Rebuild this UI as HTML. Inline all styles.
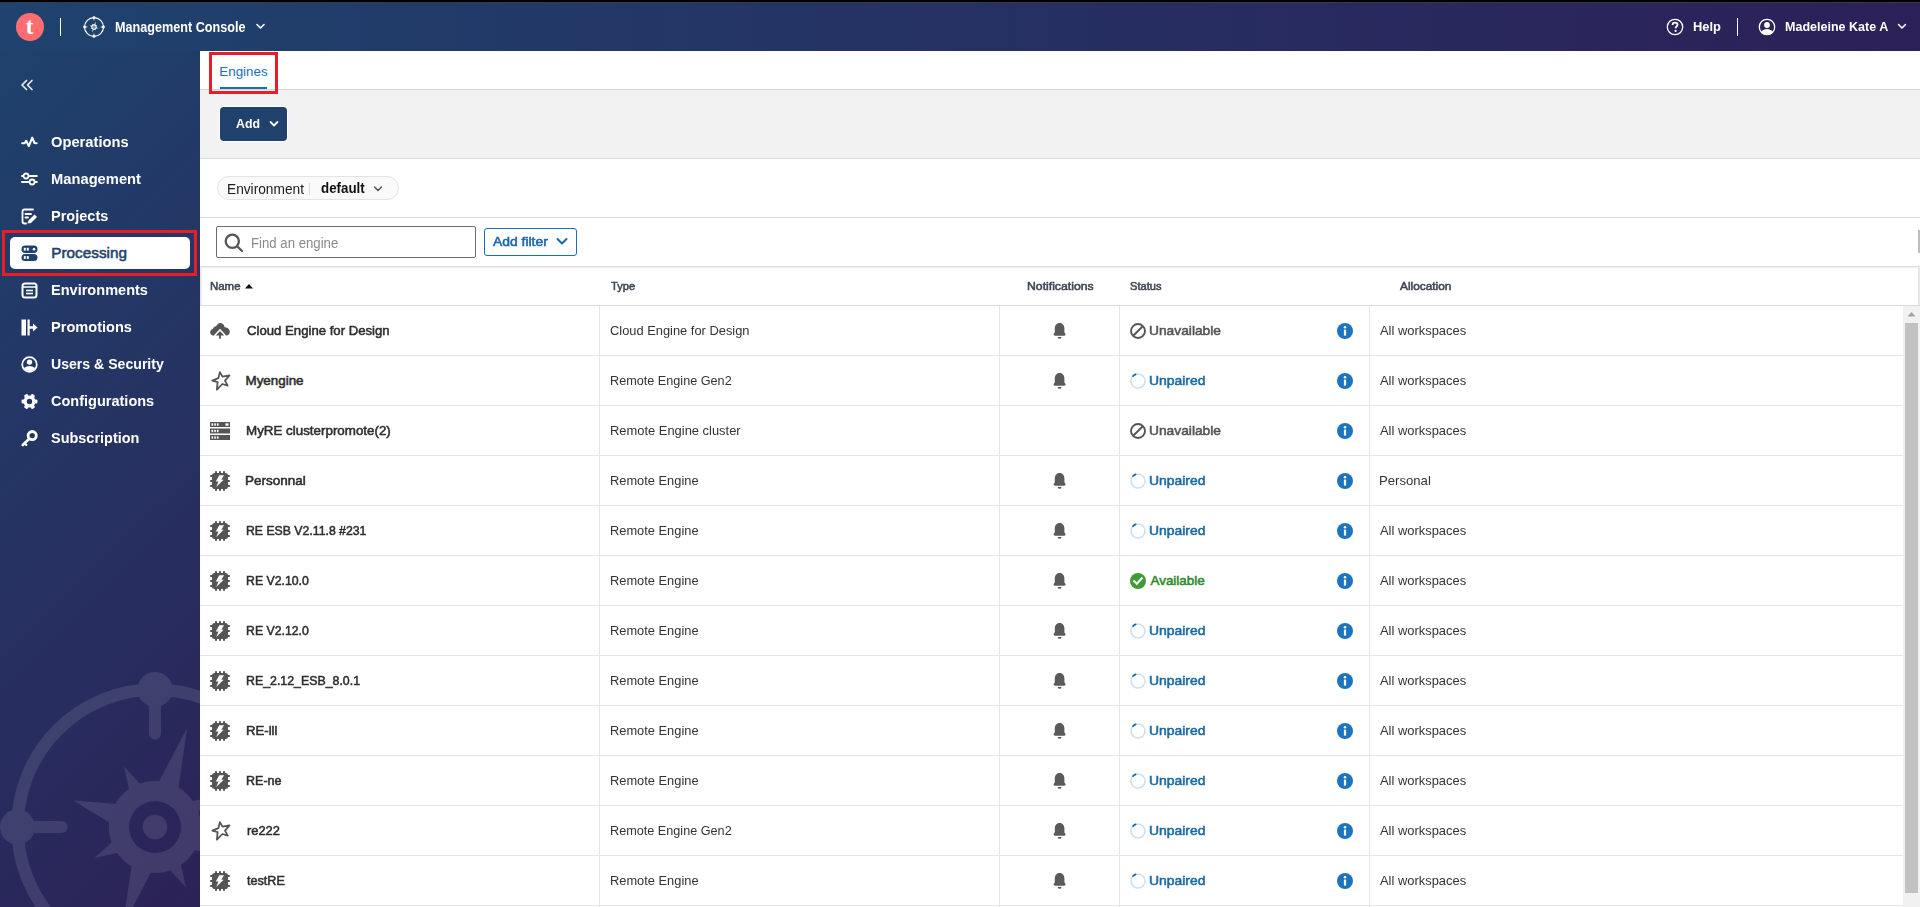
<!DOCTYPE html>
<html><head><meta charset="utf-8"><title>Management Console</title>
<style>
html,body{margin:0;padding:0;width:1920px;height:907px;overflow:hidden;background:#fff;}
body{position:relative;font-family:"Liberation Sans",sans-serif;}
.t{position:absolute;white-space:nowrap;transform-origin:0 50%;}
.b{position:absolute;display:block;}
</style></head><body>
<div class="b" style="left:0px;top:0px;width:1920px;height:51px;background:linear-gradient(90deg,#1f436e 0%,#253163 50%,#2c2058 100%);"></div>
<div class="b" style="left:0px;top:51px;width:200px;height:856px;background:linear-gradient(135deg,#1f426d 0%,#2c2257 100%);"></div>
<div class="b" style="left:200px;top:51px;width:1720px;height:856px;background:#fff;"></div>
<div class="b" style="left:0px;top:0px;width:1920px;height:2px;background:#000;"></div>
<div class="b" style="left:0px;top:2px;width:1920px;height:1px;background:#3a3a44;"></div>
<div class="b" style="left:0;top:51px;width:200px;height:856px;overflow:hidden;"><svg style="position:absolute;left:-15px;top:606px" width="340" height="340" viewBox="-20 -20 340 340"><defs><mask id="cmask" maskUnits="userSpaceOnUse" x="0" y="0" width="300" height="300"><rect x="0" y="0" width="300" height="300" fill="#fff"/><circle cx="150" cy="150" r="26" fill="#000"/><circle cx="150" cy="150" r="12.2" fill="#fff"/></mask></defs><g fill="#fff" opacity="0.1"><circle cx="150" cy="150" r="137.5" fill="none" stroke="#fff" stroke-width="12.5"/><circle cx="150" cy="12.5" r="17.5"/><circle cx="150" cy="287.5" r="17.5"/><circle cx="12.5" cy="150" r="17.5"/><circle cx="287.5" cy="150" r="17.5"/><g stroke="#fff" stroke-width="12" stroke-linecap="round"><line x1="150" y1="12.5" x2="150" y2="56.6"/><line x1="150" y1="287.5" x2="150" y2="243.4"/><line x1="12.5" y1="150" x2="56.6" y2="150"/><line x1="287.5" y1="150" x2="243.4" y2="150"/></g><g mask="url(#cmask)"><circle cx="150" cy="150" r="46"/><polygon points="151.9,108.6 182.1,51.1 172.8,115.4"/><polygon points="182.2,125.2 210.6,119.1 189.0,138.5"/><polygon points="191.4,151.9 231.8,176.6 184.6,172.8"/><polygon points="174.8,182.2 180.9,210.6 161.5,189.0"/><polygon points="148.1,191.4 117.9,248.9 127.2,184.6"/><polygon points="117.8,174.8 89.4,180.9 111.0,161.5"/><polygon points="108.6,148.1 68.2,123.4 115.4,127.2"/><polygon points="125.2,117.8 119.1,89.4 138.5,111.0"/></g></g></svg></div>
<svg class="b" style="left:16px;top:13px;" width="28" height="28" viewBox="0 0 28 28"><circle cx="14" cy="14" r="14" fill="#ff6d70"/><text x="13.6" y="21.3" text-anchor="middle" font-family="Liberation Serif" font-weight="700" font-size="23" fill="#fff">t</text></svg>
<div class="b" style="left:60px;top:18px;width:1px;height:18px;background:#fff;"></div>
<svg class="b" style="left:82.75px;top:16px" width="22" height="22" viewBox="-7 -7 314 314"><defs><mask id="cmask2" maskUnits="userSpaceOnUse" x="-10" y="-10" width="320" height="320"><rect x="-10" y="-10" width="320" height="320" fill="#fff"/><circle cx="150" cy="150" r="22" fill="#000"/><circle cx="150" cy="150" r="11" fill="#fff"/></mask></defs><g fill="#fff"><circle cx="150" cy="150" r="135" fill="none" stroke="#fff" stroke-width="17"/><circle cx="150" cy="15" r="20"/><circle cx="150" cy="285" r="20"/><circle cx="15" cy="150" r="20"/><circle cx="285" cy="150" r="20"/><g stroke="#fff" stroke-width="12" stroke-linecap="round"><line x1="150" y1="15" x2="150" y2="50"/><line x1="150" y1="285" x2="150" y2="250"/><line x1="15" y1="150" x2="50" y2="150"/><line x1="285" y1="150" x2="250" y2="150"/></g><g mask="url(#cmask2)"><circle cx="150" cy="150" r="38"/><g transform="translate(150 150) scale(0.8) translate(-150 -150)"><polygon points="151.9,108.6 182.1,51.1 172.8,115.4"/><polygon points="182.2,125.2 210.6,119.1 189.0,138.5"/><polygon points="191.4,151.9 231.8,176.6 184.6,172.8"/><polygon points="174.8,182.2 180.9,210.6 161.5,189.0"/><polygon points="148.1,191.4 117.9,248.9 127.2,184.6"/><polygon points="117.8,174.8 89.4,180.9 111.0,161.5"/><polygon points="108.6,148.1 68.2,123.4 115.4,127.2"/><polygon points="125.2,117.8 119.1,89.4 138.5,111.0"/></g></g></g></svg>
<div class="t" style="left:115.11px;top:18.56px;font-size:14.2px;line-height:17.04px;color:#ffffff;font-weight:700;transform:scaleX(0.8897);">Management Console</div>
<svg class="b" style="left:256px;top:23px;" width="9" height="7" viewBox="0 0 9 7"><polyline points="1,1.5 4.5,5 8,1.5" fill="none" stroke="#fff" stroke-width="1.6" stroke-linecap="round" stroke-linejoin="round"/></svg>
<svg class="b" style="left:1666px;top:18px;" width="18" height="18" viewBox="0 0 18 18"><circle cx="9" cy="9" r="7.7" fill="none" stroke="#fff" stroke-width="1.3"/><path d="M6.6,6.9 C6.6,5.4 7.6,4.6 9,4.6 C10.5,4.6 11.5,5.4 11.5,6.7 C11.5,8.4 9.6,8.5 9.6,10.3" fill="none" stroke="#fff" stroke-width="1.8" stroke-linecap="butt"/><circle cx="9.6" cy="12.9" r="1.1" fill="#fff"/></svg>
<div class="t" style="left:1693.04px;top:19.22px;font-size:13.4px;line-height:16.08px;color:#ffffff;font-weight:700;transform:scaleX(0.9643);">Help</div>
<div class="b" style="left:1737px;top:18px;width:1px;height:18px;background:#fff;"></div>
<svg class="b" style="left:1758px;top:18px;" width="18" height="18" viewBox="0 0 18 18"><defs><clipPath id="uc"><circle cx="9" cy="9" r="8"/></clipPath></defs><circle cx="9" cy="9" r="7.7" fill="none" stroke="#fff" stroke-width="1.3"/><circle cx="9" cy="7" r="2.9" fill="#fff"/><g clip-path="url(#uc)"><ellipse cx="9" cy="16.2" rx="6.6" ry="5.2" fill="#fff"/></g></svg>
<div class="t" style="left:1785.06px;top:19.22px;font-size:13.4px;line-height:16.08px;color:#ffffff;font-weight:700;transform:scaleX(0.9358);">Madeleine Kate A</div>
<svg class="b" style="left:1897px;top:23px;" width="10" height="7" viewBox="0 0 10 7"><polyline points="1.5,1.5 5,5 8.5,1.5" fill="none" stroke="#fff" stroke-width="1.6" stroke-linecap="round" stroke-linejoin="round"/></svg>
<svg class="b" style="left:20px;top:78px;" width="14" height="14" viewBox="0 0 14 14"><g fill="none" stroke="#e6e9f0" stroke-width="1.7" stroke-linecap="round" stroke-linejoin="round"><polyline points="6.5,2.5 2,7 6.5,11.5"/><polyline points="12,2.5 7.5,7 12,11.5"/></g></svg>
<div class="b" style="left:10px;top:237px;width:180px;height:32px;background:#fff;border-radius:5px;"></div>
<svg class="b" style="left:20.5px;top:134.5px;" width="17" height="17" viewBox="0 0 17 17"><polyline points="1.2,8.25 3.6,8.25 5.2,5.8 7.8,11.1 11.3,2.7 13.5,8 15.6,8.25" fill="none" stroke="#fff" stroke-width="2.1" stroke-linecap="round" stroke-linejoin="round"/></svg>
<div class="t" style="left:51.34px;top:133.22px;font-size:15.3px;line-height:18.36px;color:#ffffff;font-weight:700;transform:scaleX(0.9620);">Operations</div>
<svg class="b" style="left:20.5px;top:171px;" width="17" height="17" viewBox="0 0 17 17"><g stroke="#fff" stroke-width="2" stroke-linecap="round" fill="none"><line x1="1" y1="5" x2="15.8" y2="5"/><line x1="1" y1="11" x2="15.8" y2="11"/></g><circle cx="5" cy="5" r="2.5" fill="#1f406c" stroke="#fff" stroke-width="1.8"/><circle cx="11.1" cy="11" r="2.5" fill="#1f406c" stroke="#fff" stroke-width="1.8"/></svg>
<div class="t" style="left:51.34px;top:170.22px;font-size:15.3px;line-height:18.36px;color:#ffffff;font-weight:700;transform:scaleX(0.9624);">Management</div>
<svg class="b" style="left:20.5px;top:208px;" width="17" height="17" viewBox="0 0 17 17"><path d="M12,1.5 H3.5 Q1.5,1.5 1.5,3.5 V13.5 Q1.5,15.5 3.5,15.5 H5" fill="none" stroke="#fff" stroke-width="1.8" stroke-linecap="round"/><line x1="4.5" y1="6" x2="10" y2="6" stroke="#fff" stroke-width="1.8" stroke-linecap="round"/><line x1="4.5" y1="9.5" x2="7" y2="9.5" stroke="#fff" stroke-width="1.8" stroke-linecap="round"/><path d="M13.5,6.5 L16,9 L10,15 L6.5,15.5 L7.5,12.5 Z" fill="#fff"/></svg>
<div class="t" style="left:51.35px;top:207.22px;font-size:15.3px;line-height:18.36px;color:#ffffff;font-weight:700;transform:scaleX(0.9492);">Projects</div>
<svg class="b" style="left:20.5px;top:245px;" width="17" height="17" viewBox="0 0 17 17"><rect x="0.5" y="0.5" width="16" height="7.5" rx="3.75" fill="#1f416c"/><rect x="0.5" y="9" width="16" height="7" rx="3.5" fill="#1f416c"/><rect x="2.8" y="2.8" width="2" height="2.8" fill="#fff"/><rect x="5.8" y="2.8" width="2" height="2.8" fill="#fff"/><circle cx="13" cy="4.2" r="1.3" fill="#fff"/><rect x="2.8" y="11.1" width="2" height="2.8" fill="#fff"/><rect x="5.8" y="11.1" width="2" height="2.8" fill="#fff"/></svg>
<div class="t" style="left:51.30px;top:244.22px;font-size:15.3px;line-height:18.36px;color:#1f416c;font-weight:400;-webkit-text-stroke:0.55px #1f416c;">Processing</div>
<svg class="b" style="left:20.5px;top:281.5px;" width="17" height="17" viewBox="0 0 17 17"><rect x="1.5" y="1.5" width="14" height="14" rx="2.5" fill="none" stroke="#fff" stroke-width="2"/><line x1="1.5" y1="5" x2="15.5" y2="5" stroke="#fff" stroke-width="1.5"/><line x1="5" y1="8.5" x2="12" y2="8.5" stroke="#fff" stroke-width="1.6"/><line x1="5" y1="11.5" x2="12" y2="11.5" stroke="#fff" stroke-width="1.6"/></svg>
<div class="t" style="left:51.35px;top:281.22px;font-size:15.3px;line-height:18.36px;color:#ffffff;font-weight:700;transform:scaleX(0.9505);">Environments</div>
<svg class="b" style="left:20.5px;top:319px;" width="17" height="17" viewBox="0 0 17 17"><rect x="0.5" y="0.5" width="4.5" height="16" fill="#fff"/><rect x="6.5" y="0.5" width="2.2" height="16" fill="#fff"/><polygon points="8,7.2 12,7.2 12,4.6 16.5,8.5 12,12.4 12,9.8 8,9.8" fill="#fff"/></svg>
<div class="t" style="left:51.35px;top:318.22px;font-size:15.3px;line-height:18.36px;color:#ffffff;font-weight:700;transform:scaleX(0.9524);">Promotions</div>
<svg class="b" style="left:20.5px;top:356px;" width="17" height="17" viewBox="0 0 17 17"><defs><clipPath id="uc2"><circle cx="8.5" cy="8.5" r="6.6"/></clipPath></defs><circle cx="8.5" cy="8.5" r="7.3" fill="none" stroke="#fff" stroke-width="1.7"/><circle cx="8.5" cy="6.1" r="2.7" fill="#fff"/><g clip-path="url(#uc2)"><ellipse cx="8.5" cy="15.2" rx="6.8" ry="5.2" fill="#fff"/></g></svg>
<div class="t" style="left:51.38px;top:355.22px;font-size:15.3px;line-height:18.36px;color:#ffffff;font-weight:700;transform:scaleX(0.9215);">Users &amp; Security</div>
<svg class="b" style="left:20.5px;top:393px;" width="17" height="17" viewBox="0 0 17 17"><circle cx="8.5" cy="8.5" r="6" fill="#fff"/><rect x="6.5" y="0.6" width="4" height="4.2" rx="0.9" fill="#fff" transform="rotate(30 8.5 8.5)"/><rect x="6.5" y="0.6" width="4" height="4.2" rx="0.9" fill="#fff" transform="rotate(90 8.5 8.5)"/><rect x="6.5" y="0.6" width="4" height="4.2" rx="0.9" fill="#fff" transform="rotate(150 8.5 8.5)"/><rect x="6.5" y="0.6" width="4" height="4.2" rx="0.9" fill="#fff" transform="rotate(210 8.5 8.5)"/><rect x="6.5" y="0.6" width="4" height="4.2" rx="0.9" fill="#fff" transform="rotate(270 8.5 8.5)"/><rect x="6.5" y="0.6" width="4" height="4.2" rx="0.9" fill="#fff" transform="rotate(330 8.5 8.5)"/><circle cx="8.5" cy="8.5" r="2.7" fill="#23365f"/></svg>
<div class="t" style="left:51.35px;top:392.22px;font-size:15.3px;line-height:18.36px;color:#ffffff;font-weight:700;transform:scaleX(0.9486);">Configurations</div>
<svg class="b" style="left:20.5px;top:430px;" width="17" height="17" viewBox="0 0 17 17"><circle cx="11.2" cy="5.6" r="4.1" fill="none" stroke="#fff" stroke-width="2.8"/><line x1="8.2" y1="8.7" x2="1.8" y2="15" stroke="#fff" stroke-width="2.6" stroke-linecap="round"/><line x1="3.6" y1="13.2" x2="5.3" y2="14.9" stroke="#fff" stroke-width="2.2" stroke-linecap="round"/></svg>
<div class="t" style="left:51.35px;top:429.22px;font-size:15.3px;line-height:18.36px;color:#ffffff;font-weight:700;transform:scaleX(0.9457);">Subscription</div>
<div class="b" style="left:200px;top:51px;width:1720px;height:38px;background:#fff;"></div>
<div class="b" style="left:200px;top:89px;width:1720px;height:1px;background:#d4d4d4;"></div>
<div class="t" style="left:219.30px;top:64.02px;font-size:13.4px;line-height:16.08px;color:#1a6fba;font-weight:400;">Engines</div>
<div class="b" style="left:220px;top:87px;width:47px;height:2px;background:#1a6fba;"></div>
<div class="b" style="left:200px;top:90px;width:1720px;height:68px;background:#f2f2f2;"></div>
<div class="b" style="left:200px;top:158px;width:1720px;height:1px;background:#d9d9d9;"></div>
<div class="b" style="left:219px;top:106px;width:69px;height:36px;background:#fff;border-radius:5px;"></div>
<div class="b" style="left:220px;top:107px;width:67px;height:34px;background:#1f416c;border-radius:4px;"></div>
<div class="t" style="left:236.00px;top:115.72px;font-size:13.4px;line-height:16.08px;color:#ffffff;font-weight:700;transform:scaleX(0.9200);">Add</div>
<svg class="b" style="left:269px;top:120px;" width="10" height="8" viewBox="0 0 10 8"><polyline points="1.5,2 5,5.5 8.5,2" fill="none" stroke="#fff" stroke-width="1.8" stroke-linecap="round" stroke-linejoin="round"/></svg>
<div class="b" style="left:200px;top:159px;width:1720px;height:58px;background:#fff;"></div>
<div class="b" style="left:200px;top:217px;width:1720px;height:1px;background:#dcdcdc;"></div>
<div class="b" style="left:217px;top:176px;width:182px;height:24px;box-sizing:border-box;background:#fafafa;border:1px solid #e3e3e3;border-radius:12px;"></div>
<div class="t" style="left:227.41px;top:181.54px;font-size:13.8px;line-height:16.56px;color:#202020;font-weight:400;transform:scaleX(0.9934);">Environment</div>
<div class="b" style="left:309px;top:183px;width:1px;height:12px;background:#dcdcdc;"></div>
<div class="t" style="left:320.53px;top:180.84px;font-size:13.8px;line-height:16.56px;color:#111;font-weight:700;transform:scaleX(0.9659);">default</div>
<svg class="b" style="left:373px;top:185px;" width="10" height="8" viewBox="0 0 10 8"><polyline points="1.5,2 5,5.5 8.5,2" fill="none" stroke="#555" stroke-width="1.5" stroke-linecap="round" stroke-linejoin="round"/></svg>
<div class="b" style="left:200px;top:218px;width:1720px;height:48px;background:#fff;"></div>
<div class="b" style="left:216px;top:226px;width:260px;height:32px;box-sizing:border-box;background:#fff;border:1px solid #6b6b6b;border-radius:2px;"></div>
<svg class="b" style="left:224px;top:233px;" width="20" height="20" viewBox="0 0 20 20"><circle cx="8.3" cy="8.3" r="6.6" fill="none" stroke="#555" stroke-width="2.3"/><line x1="13.2" y1="13.2" x2="18" y2="18" stroke="#555" stroke-width="2.3" stroke-linecap="round"/></svg>
<div class="t" style="left:251.13px;top:233.61px;font-size:15.2px;line-height:18.24px;color:#8a8a8a;font-weight:400;transform:scaleX(0.8687);">Find an engine</div>
<div class="b" style="left:484px;top:228px;width:93px;height:28px;box-sizing:border-box;background:#fff;border:1px solid #1a6fba;border-radius:3px;"></div>
<div class="t" style="left:493.30px;top:234.02px;font-size:13.4px;line-height:16.08px;color:#1a66aa;font-weight:400;-webkit-text-stroke:0.55px #1a66aa;transform:scaleX(1.0377);">Add filter</div>
<svg class="b" style="left:556px;top:237px;" width="12" height="9" viewBox="0 0 12 9"><polyline points="1.5,2 6,6.5 10.5,2" fill="none" stroke="#1a66aa" stroke-width="2" stroke-linecap="round" stroke-linejoin="round"/></svg>
<div class="b" style="left:200px;top:266px;width:1720px;height:39px;box-sizing:border-box;background:#fff;border-left:1px solid #e6e6e6;border-right:2px solid #e6e6e6;"></div>
<div class="b" style="left:200px;top:266px;width:1720px;height:1px;background:#dcdcdc;"></div>
<div class="b" style="left:200px;top:267px;width:1720px;height:1px;background:#f0f0f0;"></div>
<div class="b" style="left:201px;top:267px;width:1px;height:38px;background:#efefef;"></div>
<div class="b" style="left:200px;top:305px;width:1720px;height:1px;background:#d9d9d9;"></div>
<div class="b" style="left:1918px;top:230px;width:2px;height:23px;background:#bdbdbd;"></div>
<div class="t" style="left:210.21px;top:279.02px;font-size:11.6px;line-height:13.92px;color:#3f4553;font-weight:400;-webkit-text-stroke:0.55px #3f4553;transform:scaleX(0.9867);">Name</div>
<svg class="b" style="left:244px;top:283px;" width="10" height="6" viewBox="0 0 10 6"><polygon points="1,5.5 5,1 9,5.5" fill="#111"/></svg>
<div class="t" style="left:610.90px;top:279.02px;font-size:11.6px;line-height:13.92px;color:#3f4553;font-weight:400;-webkit-text-stroke:0.55px #3f4553;transform:scaleX(0.9600);">Type</div>
<div class="t" style="left:1026.55px;top:279.02px;font-size:11.6px;line-height:13.92px;color:#3f4553;font-weight:400;-webkit-text-stroke:0.55px #3f4553;transform:scaleX(1.0548);">Notifications</div>
<div class="t" style="left:1130.40px;top:279.02px;font-size:11.6px;line-height:13.92px;color:#3f4553;font-weight:400;-webkit-text-stroke:0.55px #3f4553;transform:scaleX(0.9576);">Status</div>
<div class="t" style="left:1400.30px;top:279.02px;font-size:11.6px;line-height:13.92px;color:#3f4553;font-weight:400;-webkit-text-stroke:0.55px #3f4553;transform:scaleX(1.0220);">Allocation</div>
<div class="b" style="left:200px;top:355px;width:1703px;height:1px;background:#e6e6e6;"></div>
<div class="b" style="left:200px;top:405px;width:1703px;height:1px;background:#e6e6e6;"></div>
<div class="b" style="left:200px;top:455px;width:1703px;height:1px;background:#e6e6e6;"></div>
<div class="b" style="left:200px;top:505px;width:1703px;height:1px;background:#e6e6e6;"></div>
<div class="b" style="left:200px;top:555px;width:1703px;height:1px;background:#e6e6e6;"></div>
<div class="b" style="left:200px;top:605px;width:1703px;height:1px;background:#e6e6e6;"></div>
<div class="b" style="left:200px;top:655px;width:1703px;height:1px;background:#e6e6e6;"></div>
<div class="b" style="left:200px;top:705px;width:1703px;height:1px;background:#e6e6e6;"></div>
<div class="b" style="left:200px;top:755px;width:1703px;height:1px;background:#e6e6e6;"></div>
<div class="b" style="left:200px;top:805px;width:1703px;height:1px;background:#e6e6e6;"></div>
<div class="b" style="left:200px;top:855px;width:1703px;height:1px;background:#e6e6e6;"></div>
<div class="b" style="left:200px;top:905px;width:1703px;height:1px;background:#e6e6e6;"></div>
<div class="b" style="left:599px;top:306px;width:1px;height:601px;background:#e6e6e6;"></div>
<div class="b" style="left:999px;top:306px;width:1px;height:601px;background:#e6e6e6;"></div>
<div class="b" style="left:1119px;top:306px;width:1px;height:601px;background:#e6e6e6;"></div>
<div class="b" style="left:1369px;top:306px;width:1px;height:601px;background:#e6e6e6;"></div>
<div class="b" style="left:1903px;top:306px;width:17px;height:601px;background:#f1f1f1;"></div>
<svg class="b" style="left:1906px;top:310px;" width="11" height="8" viewBox="0 0 11 8"><polygon points="1.5,6.5 5.5,2 9.5,6.5" fill="#a3a3a3"/></svg>
<div class="b" style="left:1905px;top:323px;width:13px;height:570px;background:#c1c1c1;"></div>
<svg class="b" style="left:210px;top:323px;" width="20" height="16" viewBox="0 0 20 16"><path d="M3.5,12.4 C1.3,12.4 0.2,10.9 0.2,9.2 C0.2,7.5 1.4,6.2 3,6 C3.3,4.3 4.6,3.2 6.2,3.2 C7.1,1.3 8.4,0 10.2,0 C12.6,0 14.4,1.8 14.6,4.2 C17.4,4.3 19.8,6.2 19.8,8.7 C19.8,10.9 18.3,12.4 16.2,12.4 Z" fill="#555"/><polyline points="4.6,12.8 10,7.1 15.4,12.8" fill="none" stroke="#fff" stroke-width="1.7"/><polygon points="10,8.3 13.8,12.1 10.9,12.1 10.9,15.8 9.1,15.8 9.1,12.1 6.2,12.1" fill="#555"/></svg>
<div class="t" style="left:246.50px;top:323.02px;font-size:13.4px;line-height:16.08px;color:#2e2e2e;font-weight:400;-webkit-text-stroke:0.55px #2e2e2e;transform:scaleX(0.9828);">Cloud Engine for Design</div>
<div class="t" style="left:609.64px;top:323.02px;font-size:13.4px;line-height:16.08px;color:#333333;font-weight:400;transform:scaleX(0.9611);">Cloud Engine for Design</div>
<svg class="b" style="left:1052.8px;top:323px;" width="13" height="16" viewBox="0 0 13 16"><path d="M6.6,0.1 C3.4,0.1 1.8,2.6 1.8,5.6 L1.8,9.1 C1.8,10.1 0.6,10.7 0.6,11.5 C0.6,12.2 1.2,12.7 2,12.7 L11.2,12.7 C12,12.7 12.6,12.2 12.6,11.5 C12.6,10.7 11.4,10.1 11.4,9.1 L11.4,5.6 C11.4,2.6 9.8,0.1 6.6,0.1 Z" fill="#5a5a5a"/><path d="M4.7,13.9 L8.5,13.9 C8.5,15 7.7,15.8 6.6,15.8 C5.5,15.8 4.7,15 4.7,13.9 Z" fill="#5a5a5a"/></svg>
<svg class="b" style="left:1130px;top:323px;" width="16" height="16" viewBox="0 0 16 16"><circle cx="8" cy="8" r="7" fill="none" stroke="#555" stroke-width="1.9"/><line x1="12.5" y1="3.5" x2="3.5" y2="12.5" stroke="#555" stroke-width="1.9"/></svg>
<div class="t" style="left:1149.47px;top:323.02px;font-size:13.4px;line-height:16.08px;color:#555555;font-weight:400;-webkit-text-stroke:0.55px #555555;transform:scaleX(1.0290);">Unavailable</div>
<svg class="b" style="left:1337px;top:323px;" width="16" height="16" viewBox="0 0 16 16"><circle cx="8" cy="8" r="8" fill="#1d74be"/><rect x="6.9" y="6.6" width="2.2" height="6" fill="#fff"/><circle cx="8" cy="4.3" r="1.25" fill="#fff"/></svg>
<div class="t" style="left:1380.20px;top:323.02px;font-size:13.4px;line-height:16.08px;color:#333333;font-weight:400;transform:scaleX(0.9640);">All workspaces</div>
<svg class="b" style="left:210.5px;top:371.2px;" width="20" height="20" viewBox="0 0 20 20"><polygon points="8.9,1.1 11.5,5.6 18.5,4.3 14,9.6 16.7,14.7 11.4,13 5.9,18.7 6.6,11.2 1.3,9.6 7.4,7.1" fill="none" stroke="#555" stroke-width="1.8" stroke-linejoin="round"/></svg>
<div class="t" style="left:245.50px;top:373.02px;font-size:13.4px;line-height:16.08px;color:#2e2e2e;font-weight:400;-webkit-text-stroke:0.55px #2e2e2e;">Myengine</div>
<div class="t" style="left:609.66px;top:373.02px;font-size:13.4px;line-height:16.08px;color:#333333;font-weight:400;transform:scaleX(0.9449);">Remote Engine Gen2</div>
<svg class="b" style="left:1052.8px;top:373px;" width="13" height="16" viewBox="0 0 13 16"><path d="M6.6,0.1 C3.4,0.1 1.8,2.6 1.8,5.6 L1.8,9.1 C1.8,10.1 0.6,10.7 0.6,11.5 C0.6,12.2 1.2,12.7 2,12.7 L11.2,12.7 C12,12.7 12.6,12.2 12.6,11.5 C12.6,10.7 11.4,10.1 11.4,9.1 L11.4,5.6 C11.4,2.6 9.8,0.1 6.6,0.1 Z" fill="#5a5a5a"/><path d="M4.7,13.9 L8.5,13.9 C8.5,15 7.7,15.8 6.6,15.8 C5.5,15.8 4.7,15 4.7,13.9 Z" fill="#5a5a5a"/></svg>
<svg class="b" style="left:1130px;top:373px;" width="16" height="16" viewBox="0 0 16 16"><circle cx="8" cy="8" r="7" fill="none" stroke="#cde0f1" stroke-width="1.6"/><path d="M3.05,3.05 A7,7 0 0 1 5.6,1.4" fill="none" stroke="#1b6aa5" stroke-width="1.8" stroke-linecap="round"/></svg>
<div class="t" style="left:1149.46px;top:373.02px;font-size:13.4px;line-height:16.08px;color:#1b6aa5;font-weight:400;-webkit-text-stroke:0.55px #1b6aa5;transform:scaleX(1.0377);">Unpaired</div>
<svg class="b" style="left:1337px;top:373px;" width="16" height="16" viewBox="0 0 16 16"><circle cx="8" cy="8" r="8" fill="#1d74be"/><rect x="6.9" y="6.6" width="2.2" height="6" fill="#fff"/><circle cx="8" cy="4.3" r="1.25" fill="#fff"/></svg>
<div class="t" style="left:1380.20px;top:373.02px;font-size:13.4px;line-height:16.08px;color:#333333;font-weight:400;transform:scaleX(0.9640);">All workspaces</div>
<svg class="b" style="left:210px;top:422px;" width="20" height="18" viewBox="0 0 20 18"><rect x="0" y="0" width="20" height="5" fill="#555"/><rect x="0" y="6.5" width="20" height="5" fill="#555"/><rect x="0" y="13" width="20" height="5" fill="#555"/><g fill="#fff"><rect x="1.5" y="1.3" width="1.6" height="2.4"/><rect x="4.2" y="1.3" width="1.6" height="2.4"/><rect x="6.9" y="1.3" width="1.6" height="2.4"/><rect x="15.5" y="1.3" width="3" height="2.4"/><rect x="1.5" y="7.8" width="1.6" height="2.4"/><rect x="4.2" y="7.8" width="1.6" height="2.4"/><rect x="6.9" y="7.8" width="1.6" height="2.4"/><rect x="1.5" y="14.3" width="1.6" height="2.4"/><rect x="4.2" y="14.3" width="1.6" height="2.4"/><rect x="6.9" y="14.3" width="1.6" height="2.4"/></g></svg>
<div class="t" style="left:245.50px;top:423.02px;font-size:13.4px;line-height:16.08px;color:#2e2e2e;font-weight:400;-webkit-text-stroke:0.55px #2e2e2e;transform:scaleX(0.9979);">MyRE clusterpromote(2)</div>
<div class="t" style="left:609.64px;top:423.02px;font-size:13.4px;line-height:16.08px;color:#333333;font-weight:400;transform:scaleX(0.9642);">Remote Engine cluster</div>
<svg class="b" style="left:1130px;top:423px;" width="16" height="16" viewBox="0 0 16 16"><circle cx="8" cy="8" r="7" fill="none" stroke="#555" stroke-width="1.9"/><line x1="12.5" y1="3.5" x2="3.5" y2="12.5" stroke="#555" stroke-width="1.9"/></svg>
<div class="t" style="left:1149.47px;top:423.02px;font-size:13.4px;line-height:16.08px;color:#555555;font-weight:400;-webkit-text-stroke:0.55px #555555;transform:scaleX(1.0290);">Unavailable</div>
<svg class="b" style="left:1337px;top:423px;" width="16" height="16" viewBox="0 0 16 16"><circle cx="8" cy="8" r="8" fill="#1d74be"/><rect x="6.9" y="6.6" width="2.2" height="6" fill="#fff"/><circle cx="8" cy="4.3" r="1.25" fill="#fff"/></svg>
<div class="t" style="left:1380.20px;top:423.02px;font-size:13.4px;line-height:16.08px;color:#333333;font-weight:400;transform:scaleX(0.9640);">All workspaces</div>
<svg class="b" style="left:210px;top:471px;" width="20" height="20" viewBox="0 0 20 20"><g fill="#555"><rect x="5" y="0.2" width="2" height="2.5"/><rect x="5" y="17.3" width="2" height="2.5"/><rect x="9" y="0.2" width="2" height="2.5"/><rect x="9" y="17.3" width="2" height="2.5"/><rect x="13" y="0.2" width="2" height="2.5"/><rect x="13" y="17.3" width="2" height="2.5"/><rect x="0.2" y="4" width="2.5" height="2"/><rect x="17.3" y="4" width="2.5" height="2"/><rect x="0.2" y="9" width="2.5" height="2"/><rect x="17.3" y="9" width="2.5" height="2"/><rect x="0.2" y="14" width="2.5" height="2"/><rect x="17.3" y="14" width="2.5" height="2"/><rect x="2" y="2" width="16" height="16" rx="2.5"/></g><polygon points="9.3,4.3 14,4.3 11.3,8.7 13.7,8.7 6.2,15.9 8.5,10.6 5.8,10.6" fill="#fff"/></svg>
<div class="t" style="left:245.49px;top:473.02px;font-size:13.4px;line-height:16.08px;color:#2e2e2e;font-weight:400;-webkit-text-stroke:0.55px #2e2e2e;transform:scaleX(1.0085);">Personnal</div>
<div class="t" style="left:609.64px;top:473.02px;font-size:13.4px;line-height:16.08px;color:#333333;font-weight:400;transform:scaleX(0.9593);">Remote Engine</div>
<svg class="b" style="left:1052.8px;top:473px;" width="13" height="16" viewBox="0 0 13 16"><path d="M6.6,0.1 C3.4,0.1 1.8,2.6 1.8,5.6 L1.8,9.1 C1.8,10.1 0.6,10.7 0.6,11.5 C0.6,12.2 1.2,12.7 2,12.7 L11.2,12.7 C12,12.7 12.6,12.2 12.6,11.5 C12.6,10.7 11.4,10.1 11.4,9.1 L11.4,5.6 C11.4,2.6 9.8,0.1 6.6,0.1 Z" fill="#5a5a5a"/><path d="M4.7,13.9 L8.5,13.9 C8.5,15 7.7,15.8 6.6,15.8 C5.5,15.8 4.7,15 4.7,13.9 Z" fill="#5a5a5a"/></svg>
<svg class="b" style="left:1130px;top:473px;" width="16" height="16" viewBox="0 0 16 16"><circle cx="8" cy="8" r="7" fill="none" stroke="#cde0f1" stroke-width="1.6"/><path d="M3.05,3.05 A7,7 0 0 1 5.6,1.4" fill="none" stroke="#1b6aa5" stroke-width="1.8" stroke-linecap="round"/></svg>
<div class="t" style="left:1149.46px;top:473.02px;font-size:13.4px;line-height:16.08px;color:#1b6aa5;font-weight:400;-webkit-text-stroke:0.55px #1b6aa5;transform:scaleX(1.0377);">Unpaired</div>
<svg class="b" style="left:1337px;top:473px;" width="16" height="16" viewBox="0 0 16 16"><circle cx="8" cy="8" r="8" fill="#1d74be"/><rect x="6.9" y="6.6" width="2.2" height="6" fill="#fff"/><circle cx="8" cy="4.3" r="1.25" fill="#fff"/></svg>
<div class="t" style="left:1379.22px;top:473.02px;font-size:13.4px;line-height:16.08px;color:#333333;font-weight:400;transform:scaleX(0.9804);">Personal</div>
<svg class="b" style="left:210px;top:521px;" width="20" height="20" viewBox="0 0 20 20"><g fill="#555"><rect x="5" y="0.2" width="2" height="2.5"/><rect x="5" y="17.3" width="2" height="2.5"/><rect x="9" y="0.2" width="2" height="2.5"/><rect x="9" y="17.3" width="2" height="2.5"/><rect x="13" y="0.2" width="2" height="2.5"/><rect x="13" y="17.3" width="2" height="2.5"/><rect x="0.2" y="4" width="2.5" height="2"/><rect x="17.3" y="4" width="2.5" height="2"/><rect x="0.2" y="9" width="2.5" height="2"/><rect x="17.3" y="9" width="2.5" height="2"/><rect x="0.2" y="14" width="2.5" height="2"/><rect x="17.3" y="14" width="2.5" height="2"/><rect x="2" y="2" width="16" height="16" rx="2.5"/></g><polygon points="9.3,4.3 14,4.3 11.3,8.7 13.7,8.7 6.2,15.9 8.5,10.6 5.8,10.6" fill="#fff"/></svg>
<div class="t" style="left:245.58px;top:523.02px;font-size:13.4px;line-height:16.08px;color:#2e2e2e;font-weight:400;-webkit-text-stroke:0.55px #2e2e2e;transform:scaleX(0.9154);">RE ESB V2.11.8 #231</div>
<div class="t" style="left:609.64px;top:523.02px;font-size:13.4px;line-height:16.08px;color:#333333;font-weight:400;transform:scaleX(0.9593);">Remote Engine</div>
<svg class="b" style="left:1052.8px;top:523px;" width="13" height="16" viewBox="0 0 13 16"><path d="M6.6,0.1 C3.4,0.1 1.8,2.6 1.8,5.6 L1.8,9.1 C1.8,10.1 0.6,10.7 0.6,11.5 C0.6,12.2 1.2,12.7 2,12.7 L11.2,12.7 C12,12.7 12.6,12.2 12.6,11.5 C12.6,10.7 11.4,10.1 11.4,9.1 L11.4,5.6 C11.4,2.6 9.8,0.1 6.6,0.1 Z" fill="#5a5a5a"/><path d="M4.7,13.9 L8.5,13.9 C8.5,15 7.7,15.8 6.6,15.8 C5.5,15.8 4.7,15 4.7,13.9 Z" fill="#5a5a5a"/></svg>
<svg class="b" style="left:1130px;top:523px;" width="16" height="16" viewBox="0 0 16 16"><circle cx="8" cy="8" r="7" fill="none" stroke="#cde0f1" stroke-width="1.6"/><path d="M3.05,3.05 A7,7 0 0 1 5.6,1.4" fill="none" stroke="#1b6aa5" stroke-width="1.8" stroke-linecap="round"/></svg>
<div class="t" style="left:1149.46px;top:523.02px;font-size:13.4px;line-height:16.08px;color:#1b6aa5;font-weight:400;-webkit-text-stroke:0.55px #1b6aa5;transform:scaleX(1.0377);">Unpaired</div>
<svg class="b" style="left:1337px;top:523px;" width="16" height="16" viewBox="0 0 16 16"><circle cx="8" cy="8" r="8" fill="#1d74be"/><rect x="6.9" y="6.6" width="2.2" height="6" fill="#fff"/><circle cx="8" cy="4.3" r="1.25" fill="#fff"/></svg>
<div class="t" style="left:1380.20px;top:523.02px;font-size:13.4px;line-height:16.08px;color:#333333;font-weight:400;transform:scaleX(0.9640);">All workspaces</div>
<svg class="b" style="left:210px;top:571px;" width="20" height="20" viewBox="0 0 20 20"><g fill="#555"><rect x="5" y="0.2" width="2" height="2.5"/><rect x="5" y="17.3" width="2" height="2.5"/><rect x="9" y="0.2" width="2" height="2.5"/><rect x="9" y="17.3" width="2" height="2.5"/><rect x="13" y="0.2" width="2" height="2.5"/><rect x="13" y="17.3" width="2" height="2.5"/><rect x="0.2" y="4" width="2.5" height="2"/><rect x="17.3" y="4" width="2.5" height="2"/><rect x="0.2" y="9" width="2.5" height="2"/><rect x="17.3" y="9" width="2.5" height="2"/><rect x="0.2" y="14" width="2.5" height="2"/><rect x="17.3" y="14" width="2.5" height="2"/><rect x="2" y="2" width="16" height="16" rx="2.5"/></g><polygon points="9.3,4.3 14,4.3 11.3,8.7 13.7,8.7 6.2,15.9 8.5,10.6 5.8,10.6" fill="#fff"/></svg>
<div class="t" style="left:245.58px;top:573.02px;font-size:13.4px;line-height:16.08px;color:#2e2e2e;font-weight:400;-webkit-text-stroke:0.55px #2e2e2e;transform:scaleX(0.9179);">RE V2.10.0</div>
<div class="t" style="left:609.64px;top:573.02px;font-size:13.4px;line-height:16.08px;color:#333333;font-weight:400;transform:scaleX(0.9593);">Remote Engine</div>
<svg class="b" style="left:1052.8px;top:573px;" width="13" height="16" viewBox="0 0 13 16"><path d="M6.6,0.1 C3.4,0.1 1.8,2.6 1.8,5.6 L1.8,9.1 C1.8,10.1 0.6,10.7 0.6,11.5 C0.6,12.2 1.2,12.7 2,12.7 L11.2,12.7 C12,12.7 12.6,12.2 12.6,11.5 C12.6,10.7 11.4,10.1 11.4,9.1 L11.4,5.6 C11.4,2.6 9.8,0.1 6.6,0.1 Z" fill="#5a5a5a"/><path d="M4.7,13.9 L8.5,13.9 C8.5,15 7.7,15.8 6.6,15.8 C5.5,15.8 4.7,15 4.7,13.9 Z" fill="#5a5a5a"/></svg>
<svg class="b" style="left:1130px;top:573px;" width="16" height="16" viewBox="0 0 16 16"><circle cx="8" cy="8" r="8" fill="#3e9a35"/><polyline points="4.2,8.2 6.9,10.7 11.8,5.3" fill="none" stroke="#fff" stroke-width="2.1" stroke-linecap="square"/></svg>
<div class="t" style="left:1150.50px;top:573.02px;font-size:13.4px;line-height:16.08px;color:#2e8a2e;font-weight:400;-webkit-text-stroke:0.55px #2e8a2e;">Available</div>
<svg class="b" style="left:1337px;top:573px;" width="16" height="16" viewBox="0 0 16 16"><circle cx="8" cy="8" r="8" fill="#1d74be"/><rect x="6.9" y="6.6" width="2.2" height="6" fill="#fff"/><circle cx="8" cy="4.3" r="1.25" fill="#fff"/></svg>
<div class="t" style="left:1380.20px;top:573.02px;font-size:13.4px;line-height:16.08px;color:#333333;font-weight:400;transform:scaleX(0.9640);">All workspaces</div>
<svg class="b" style="left:210px;top:621px;" width="20" height="20" viewBox="0 0 20 20"><g fill="#555"><rect x="5" y="0.2" width="2" height="2.5"/><rect x="5" y="17.3" width="2" height="2.5"/><rect x="9" y="0.2" width="2" height="2.5"/><rect x="9" y="17.3" width="2" height="2.5"/><rect x="13" y="0.2" width="2" height="2.5"/><rect x="13" y="17.3" width="2" height="2.5"/><rect x="0.2" y="4" width="2.5" height="2"/><rect x="17.3" y="4" width="2.5" height="2"/><rect x="0.2" y="9" width="2.5" height="2"/><rect x="17.3" y="9" width="2.5" height="2"/><rect x="0.2" y="14" width="2.5" height="2"/><rect x="17.3" y="14" width="2.5" height="2"/><rect x="2" y="2" width="16" height="16" rx="2.5"/></g><polygon points="9.3,4.3 14,4.3 11.3,8.7 13.7,8.7 6.2,15.9 8.5,10.6 5.8,10.6" fill="#fff"/></svg>
<div class="t" style="left:245.58px;top:623.02px;font-size:13.4px;line-height:16.08px;color:#2e2e2e;font-weight:400;-webkit-text-stroke:0.55px #2e2e2e;transform:scaleX(0.9179);">RE V2.12.0</div>
<div class="t" style="left:609.64px;top:623.02px;font-size:13.4px;line-height:16.08px;color:#333333;font-weight:400;transform:scaleX(0.9593);">Remote Engine</div>
<svg class="b" style="left:1052.8px;top:623px;" width="13" height="16" viewBox="0 0 13 16"><path d="M6.6,0.1 C3.4,0.1 1.8,2.6 1.8,5.6 L1.8,9.1 C1.8,10.1 0.6,10.7 0.6,11.5 C0.6,12.2 1.2,12.7 2,12.7 L11.2,12.7 C12,12.7 12.6,12.2 12.6,11.5 C12.6,10.7 11.4,10.1 11.4,9.1 L11.4,5.6 C11.4,2.6 9.8,0.1 6.6,0.1 Z" fill="#5a5a5a"/><path d="M4.7,13.9 L8.5,13.9 C8.5,15 7.7,15.8 6.6,15.8 C5.5,15.8 4.7,15 4.7,13.9 Z" fill="#5a5a5a"/></svg>
<svg class="b" style="left:1130px;top:623px;" width="16" height="16" viewBox="0 0 16 16"><circle cx="8" cy="8" r="7" fill="none" stroke="#cde0f1" stroke-width="1.6"/><path d="M3.05,3.05 A7,7 0 0 1 5.6,1.4" fill="none" stroke="#1b6aa5" stroke-width="1.8" stroke-linecap="round"/></svg>
<div class="t" style="left:1149.46px;top:623.02px;font-size:13.4px;line-height:16.08px;color:#1b6aa5;font-weight:400;-webkit-text-stroke:0.55px #1b6aa5;transform:scaleX(1.0377);">Unpaired</div>
<svg class="b" style="left:1337px;top:623px;" width="16" height="16" viewBox="0 0 16 16"><circle cx="8" cy="8" r="8" fill="#1d74be"/><rect x="6.9" y="6.6" width="2.2" height="6" fill="#fff"/><circle cx="8" cy="4.3" r="1.25" fill="#fff"/></svg>
<div class="t" style="left:1380.20px;top:623.02px;font-size:13.4px;line-height:16.08px;color:#333333;font-weight:400;transform:scaleX(0.9640);">All workspaces</div>
<svg class="b" style="left:210px;top:671px;" width="20" height="20" viewBox="0 0 20 20"><g fill="#555"><rect x="5" y="0.2" width="2" height="2.5"/><rect x="5" y="17.3" width="2" height="2.5"/><rect x="9" y="0.2" width="2" height="2.5"/><rect x="9" y="17.3" width="2" height="2.5"/><rect x="13" y="0.2" width="2" height="2.5"/><rect x="13" y="17.3" width="2" height="2.5"/><rect x="0.2" y="4" width="2.5" height="2"/><rect x="17.3" y="4" width="2.5" height="2"/><rect x="0.2" y="9" width="2.5" height="2"/><rect x="17.3" y="9" width="2.5" height="2"/><rect x="0.2" y="14" width="2.5" height="2"/><rect x="17.3" y="14" width="2.5" height="2"/><rect x="2" y="2" width="16" height="16" rx="2.5"/></g><polygon points="9.3,4.3 14,4.3 11.3,8.7 13.7,8.7 6.2,15.9 8.5,10.6 5.8,10.6" fill="#fff"/></svg>
<div class="t" style="left:245.58px;top:673.02px;font-size:13.4px;line-height:16.08px;color:#2e2e2e;font-weight:400;-webkit-text-stroke:0.55px #2e2e2e;transform:scaleX(0.9228);">RE_2.12_ESB_8.0.1</div>
<div class="t" style="left:609.64px;top:673.02px;font-size:13.4px;line-height:16.08px;color:#333333;font-weight:400;transform:scaleX(0.9593);">Remote Engine</div>
<svg class="b" style="left:1052.8px;top:673px;" width="13" height="16" viewBox="0 0 13 16"><path d="M6.6,0.1 C3.4,0.1 1.8,2.6 1.8,5.6 L1.8,9.1 C1.8,10.1 0.6,10.7 0.6,11.5 C0.6,12.2 1.2,12.7 2,12.7 L11.2,12.7 C12,12.7 12.6,12.2 12.6,11.5 C12.6,10.7 11.4,10.1 11.4,9.1 L11.4,5.6 C11.4,2.6 9.8,0.1 6.6,0.1 Z" fill="#5a5a5a"/><path d="M4.7,13.9 L8.5,13.9 C8.5,15 7.7,15.8 6.6,15.8 C5.5,15.8 4.7,15 4.7,13.9 Z" fill="#5a5a5a"/></svg>
<svg class="b" style="left:1130px;top:673px;" width="16" height="16" viewBox="0 0 16 16"><circle cx="8" cy="8" r="7" fill="none" stroke="#cde0f1" stroke-width="1.6"/><path d="M3.05,3.05 A7,7 0 0 1 5.6,1.4" fill="none" stroke="#1b6aa5" stroke-width="1.8" stroke-linecap="round"/></svg>
<div class="t" style="left:1149.46px;top:673.02px;font-size:13.4px;line-height:16.08px;color:#1b6aa5;font-weight:400;-webkit-text-stroke:0.55px #1b6aa5;transform:scaleX(1.0377);">Unpaired</div>
<svg class="b" style="left:1337px;top:673px;" width="16" height="16" viewBox="0 0 16 16"><circle cx="8" cy="8" r="8" fill="#1d74be"/><rect x="6.9" y="6.6" width="2.2" height="6" fill="#fff"/><circle cx="8" cy="4.3" r="1.25" fill="#fff"/></svg>
<div class="t" style="left:1380.20px;top:673.02px;font-size:13.4px;line-height:16.08px;color:#333333;font-weight:400;transform:scaleX(0.9640);">All workspaces</div>
<svg class="b" style="left:210px;top:721px;" width="20" height="20" viewBox="0 0 20 20"><g fill="#555"><rect x="5" y="0.2" width="2" height="2.5"/><rect x="5" y="17.3" width="2" height="2.5"/><rect x="9" y="0.2" width="2" height="2.5"/><rect x="9" y="17.3" width="2" height="2.5"/><rect x="13" y="0.2" width="2" height="2.5"/><rect x="13" y="17.3" width="2" height="2.5"/><rect x="0.2" y="4" width="2.5" height="2"/><rect x="17.3" y="4" width="2.5" height="2"/><rect x="0.2" y="9" width="2.5" height="2"/><rect x="17.3" y="9" width="2.5" height="2"/><rect x="0.2" y="14" width="2.5" height="2"/><rect x="17.3" y="14" width="2.5" height="2"/><rect x="2" y="2" width="16" height="16" rx="2.5"/></g><polygon points="9.3,4.3 14,4.3 11.3,8.7 13.7,8.7 6.2,15.9 8.5,10.6 5.8,10.6" fill="#fff"/></svg>
<div class="t" style="left:245.52px;top:723.02px;font-size:13.4px;line-height:16.08px;color:#2e2e2e;font-weight:400;-webkit-text-stroke:0.55px #2e2e2e;transform:scaleX(0.9839);">RE-lll</div>
<div class="t" style="left:609.64px;top:723.02px;font-size:13.4px;line-height:16.08px;color:#333333;font-weight:400;transform:scaleX(0.9593);">Remote Engine</div>
<svg class="b" style="left:1052.8px;top:723px;" width="13" height="16" viewBox="0 0 13 16"><path d="M6.6,0.1 C3.4,0.1 1.8,2.6 1.8,5.6 L1.8,9.1 C1.8,10.1 0.6,10.7 0.6,11.5 C0.6,12.2 1.2,12.7 2,12.7 L11.2,12.7 C12,12.7 12.6,12.2 12.6,11.5 C12.6,10.7 11.4,10.1 11.4,9.1 L11.4,5.6 C11.4,2.6 9.8,0.1 6.6,0.1 Z" fill="#5a5a5a"/><path d="M4.7,13.9 L8.5,13.9 C8.5,15 7.7,15.8 6.6,15.8 C5.5,15.8 4.7,15 4.7,13.9 Z" fill="#5a5a5a"/></svg>
<svg class="b" style="left:1130px;top:723px;" width="16" height="16" viewBox="0 0 16 16"><circle cx="8" cy="8" r="7" fill="none" stroke="#cde0f1" stroke-width="1.6"/><path d="M3.05,3.05 A7,7 0 0 1 5.6,1.4" fill="none" stroke="#1b6aa5" stroke-width="1.8" stroke-linecap="round"/></svg>
<div class="t" style="left:1149.46px;top:723.02px;font-size:13.4px;line-height:16.08px;color:#1b6aa5;font-weight:400;-webkit-text-stroke:0.55px #1b6aa5;transform:scaleX(1.0377);">Unpaired</div>
<svg class="b" style="left:1337px;top:723px;" width="16" height="16" viewBox="0 0 16 16"><circle cx="8" cy="8" r="8" fill="#1d74be"/><rect x="6.9" y="6.6" width="2.2" height="6" fill="#fff"/><circle cx="8" cy="4.3" r="1.25" fill="#fff"/></svg>
<div class="t" style="left:1380.20px;top:723.02px;font-size:13.4px;line-height:16.08px;color:#333333;font-weight:400;transform:scaleX(0.9640);">All workspaces</div>
<svg class="b" style="left:210px;top:771px;" width="20" height="20" viewBox="0 0 20 20"><g fill="#555"><rect x="5" y="0.2" width="2" height="2.5"/><rect x="5" y="17.3" width="2" height="2.5"/><rect x="9" y="0.2" width="2" height="2.5"/><rect x="9" y="17.3" width="2" height="2.5"/><rect x="13" y="0.2" width="2" height="2.5"/><rect x="13" y="17.3" width="2" height="2.5"/><rect x="0.2" y="4" width="2.5" height="2"/><rect x="17.3" y="4" width="2.5" height="2"/><rect x="0.2" y="9" width="2.5" height="2"/><rect x="17.3" y="9" width="2.5" height="2"/><rect x="0.2" y="14" width="2.5" height="2"/><rect x="17.3" y="14" width="2.5" height="2"/><rect x="2" y="2" width="16" height="16" rx="2.5"/></g><polygon points="9.3,4.3 14,4.3 11.3,8.7 13.7,8.7 6.2,15.9 8.5,10.6 5.8,10.6" fill="#fff"/></svg>
<div class="t" style="left:245.56px;top:773.02px;font-size:13.4px;line-height:16.08px;color:#2e2e2e;font-weight:400;-webkit-text-stroke:0.55px #2e2e2e;transform:scaleX(0.9351);">RE-ne</div>
<div class="t" style="left:609.64px;top:773.02px;font-size:13.4px;line-height:16.08px;color:#333333;font-weight:400;transform:scaleX(0.9593);">Remote Engine</div>
<svg class="b" style="left:1052.8px;top:773px;" width="13" height="16" viewBox="0 0 13 16"><path d="M6.6,0.1 C3.4,0.1 1.8,2.6 1.8,5.6 L1.8,9.1 C1.8,10.1 0.6,10.7 0.6,11.5 C0.6,12.2 1.2,12.7 2,12.7 L11.2,12.7 C12,12.7 12.6,12.2 12.6,11.5 C12.6,10.7 11.4,10.1 11.4,9.1 L11.4,5.6 C11.4,2.6 9.8,0.1 6.6,0.1 Z" fill="#5a5a5a"/><path d="M4.7,13.9 L8.5,13.9 C8.5,15 7.7,15.8 6.6,15.8 C5.5,15.8 4.7,15 4.7,13.9 Z" fill="#5a5a5a"/></svg>
<svg class="b" style="left:1130px;top:773px;" width="16" height="16" viewBox="0 0 16 16"><circle cx="8" cy="8" r="7" fill="none" stroke="#cde0f1" stroke-width="1.6"/><path d="M3.05,3.05 A7,7 0 0 1 5.6,1.4" fill="none" stroke="#1b6aa5" stroke-width="1.8" stroke-linecap="round"/></svg>
<div class="t" style="left:1149.46px;top:773.02px;font-size:13.4px;line-height:16.08px;color:#1b6aa5;font-weight:400;-webkit-text-stroke:0.55px #1b6aa5;transform:scaleX(1.0377);">Unpaired</div>
<svg class="b" style="left:1337px;top:773px;" width="16" height="16" viewBox="0 0 16 16"><circle cx="8" cy="8" r="8" fill="#1d74be"/><rect x="6.9" y="6.6" width="2.2" height="6" fill="#fff"/><circle cx="8" cy="4.3" r="1.25" fill="#fff"/></svg>
<div class="t" style="left:1380.20px;top:773.02px;font-size:13.4px;line-height:16.08px;color:#333333;font-weight:400;transform:scaleX(0.9640);">All workspaces</div>
<svg class="b" style="left:210.5px;top:821.2px;" width="20" height="20" viewBox="0 0 20 20"><polygon points="8.9,1.1 11.5,5.6 18.5,4.3 14,9.6 16.7,14.7 11.4,13 5.9,18.7 6.6,11.2 1.3,9.6 7.4,7.1" fill="none" stroke="#555" stroke-width="1.8" stroke-linejoin="round"/></svg>
<div class="t" style="left:246.50px;top:823.02px;font-size:13.4px;line-height:16.08px;color:#2e2e2e;font-weight:400;-webkit-text-stroke:0.55px #2e2e2e;transform:scaleX(0.9618);">re222</div>
<div class="t" style="left:609.66px;top:823.02px;font-size:13.4px;line-height:16.08px;color:#333333;font-weight:400;transform:scaleX(0.9449);">Remote Engine Gen2</div>
<svg class="b" style="left:1052.8px;top:823px;" width="13" height="16" viewBox="0 0 13 16"><path d="M6.6,0.1 C3.4,0.1 1.8,2.6 1.8,5.6 L1.8,9.1 C1.8,10.1 0.6,10.7 0.6,11.5 C0.6,12.2 1.2,12.7 2,12.7 L11.2,12.7 C12,12.7 12.6,12.2 12.6,11.5 C12.6,10.7 11.4,10.1 11.4,9.1 L11.4,5.6 C11.4,2.6 9.8,0.1 6.6,0.1 Z" fill="#5a5a5a"/><path d="M4.7,13.9 L8.5,13.9 C8.5,15 7.7,15.8 6.6,15.8 C5.5,15.8 4.7,15 4.7,13.9 Z" fill="#5a5a5a"/></svg>
<svg class="b" style="left:1130px;top:823px;" width="16" height="16" viewBox="0 0 16 16"><circle cx="8" cy="8" r="7" fill="none" stroke="#cde0f1" stroke-width="1.6"/><path d="M3.05,3.05 A7,7 0 0 1 5.6,1.4" fill="none" stroke="#1b6aa5" stroke-width="1.8" stroke-linecap="round"/></svg>
<div class="t" style="left:1149.46px;top:823.02px;font-size:13.4px;line-height:16.08px;color:#1b6aa5;font-weight:400;-webkit-text-stroke:0.55px #1b6aa5;transform:scaleX(1.0377);">Unpaired</div>
<svg class="b" style="left:1337px;top:823px;" width="16" height="16" viewBox="0 0 16 16"><circle cx="8" cy="8" r="8" fill="#1d74be"/><rect x="6.9" y="6.6" width="2.2" height="6" fill="#fff"/><circle cx="8" cy="4.3" r="1.25" fill="#fff"/></svg>
<div class="t" style="left:1380.20px;top:823.02px;font-size:13.4px;line-height:16.08px;color:#333333;font-weight:400;transform:scaleX(0.9640);">All workspaces</div>
<svg class="b" style="left:210px;top:871px;" width="20" height="20" viewBox="0 0 20 20"><g fill="#555"><rect x="5" y="0.2" width="2" height="2.5"/><rect x="5" y="17.3" width="2" height="2.5"/><rect x="9" y="0.2" width="2" height="2.5"/><rect x="9" y="17.3" width="2" height="2.5"/><rect x="13" y="0.2" width="2" height="2.5"/><rect x="13" y="17.3" width="2" height="2.5"/><rect x="0.2" y="4" width="2.5" height="2"/><rect x="17.3" y="4" width="2.5" height="2"/><rect x="0.2" y="9" width="2.5" height="2"/><rect x="17.3" y="9" width="2.5" height="2"/><rect x="0.2" y="14" width="2.5" height="2"/><rect x="17.3" y="14" width="2.5" height="2"/><rect x="2" y="2" width="16" height="16" rx="2.5"/></g><polygon points="9.3,4.3 14,4.3 11.3,8.7 13.7,8.7 6.2,15.9 8.5,10.6 5.8,10.6" fill="#fff"/></svg>
<div class="t" style="left:246.50px;top:873.02px;font-size:13.4px;line-height:16.08px;color:#2e2e2e;font-weight:400;-webkit-text-stroke:0.55px #2e2e2e;transform:scaleX(0.9425);">testRE</div>
<div class="t" style="left:609.64px;top:873.02px;font-size:13.4px;line-height:16.08px;color:#333333;font-weight:400;transform:scaleX(0.9593);">Remote Engine</div>
<svg class="b" style="left:1052.8px;top:873px;" width="13" height="16" viewBox="0 0 13 16"><path d="M6.6,0.1 C3.4,0.1 1.8,2.6 1.8,5.6 L1.8,9.1 C1.8,10.1 0.6,10.7 0.6,11.5 C0.6,12.2 1.2,12.7 2,12.7 L11.2,12.7 C12,12.7 12.6,12.2 12.6,11.5 C12.6,10.7 11.4,10.1 11.4,9.1 L11.4,5.6 C11.4,2.6 9.8,0.1 6.6,0.1 Z" fill="#5a5a5a"/><path d="M4.7,13.9 L8.5,13.9 C8.5,15 7.7,15.8 6.6,15.8 C5.5,15.8 4.7,15 4.7,13.9 Z" fill="#5a5a5a"/></svg>
<svg class="b" style="left:1130px;top:873px;" width="16" height="16" viewBox="0 0 16 16"><circle cx="8" cy="8" r="7" fill="none" stroke="#cde0f1" stroke-width="1.6"/><path d="M3.05,3.05 A7,7 0 0 1 5.6,1.4" fill="none" stroke="#1b6aa5" stroke-width="1.8" stroke-linecap="round"/></svg>
<div class="t" style="left:1149.46px;top:873.02px;font-size:13.4px;line-height:16.08px;color:#1b6aa5;font-weight:400;-webkit-text-stroke:0.55px #1b6aa5;transform:scaleX(1.0377);">Unpaired</div>
<svg class="b" style="left:1337px;top:873px;" width="16" height="16" viewBox="0 0 16 16"><circle cx="8" cy="8" r="8" fill="#1d74be"/><rect x="6.9" y="6.6" width="2.2" height="6" fill="#fff"/><circle cx="8" cy="4.3" r="1.25" fill="#fff"/></svg>
<div class="t" style="left:1380.20px;top:873.02px;font-size:13.4px;line-height:16.08px;color:#333333;font-weight:400;transform:scaleX(0.9640);">All workspaces</div>
<div class="b" style="left:209px;top:52px;width:69px;height:42px;box-sizing:border-box;border:3px solid #ec1c24;"></div>
<div class="b" style="left:2px;top:230px;width:195px;height:46px;box-sizing:border-box;border:3px solid #ec1c24;"></div>
</body></html>
